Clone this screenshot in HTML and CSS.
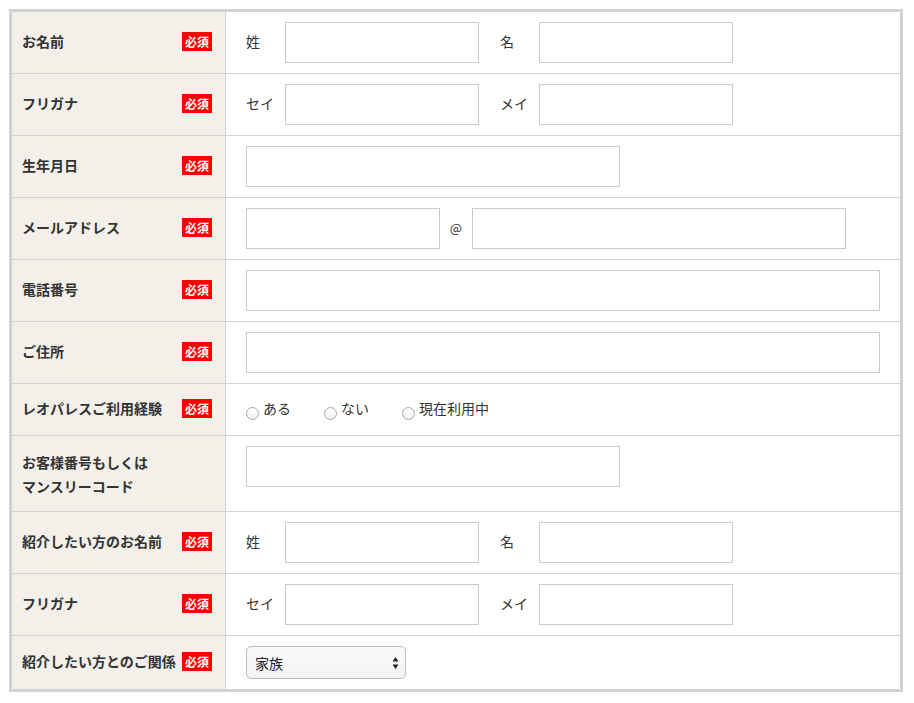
FILE: index.html
```html
<!DOCTYPE html>
<html lang="ja">
<head>
    <meta charset="UTF-8">
    <meta name="viewport" content="width=device-width, initial-scale=1.0">
    <title>ご紹介フォーム</title>
    <link rel="stylesheet" href="styles.css">
</head>
<body>

    <table class="form-table">
        <tr>
            <th><div class="th-inner"><span>お名前</span><span class="req">必須</span></div></th>
            <td>
                <div class="fields">
                    <span class="sub-label">姓</span><input type="text" class="w-s">
                    <span class="sub-label gap">名</span><input type="text" class="w-s">
                </div>
            </td>
        </tr>
        <tr>
            <th><div class="th-inner"><span>フリガナ</span><span class="req">必須</span></div></th>
            <td>
                <div class="fields">
                    <span class="sub-label">セイ</span><input type="text" class="w-s">
                    <span class="sub-label gap">メイ</span><input type="text" class="w-s">
                </div>
            </td>
        </tr>
        <tr>
            <th><div class="th-inner"><span>生年月日</span><span class="req">必須</span></div></th>
            <td><input type="text" class="w-m"></td>
        </tr>
        <tr>
            <th><div class="th-inner"><span>メールアドレス</span><span class="req">必須</span></div></th>
            <td>
                <div class="fields">
                    <input type="text" class="w-s"><span class="at">@</span><input type="text" class="w-m">
                </div>
            </td>
        </tr>
        <tr>
            <th><div class="th-inner"><span>電話番号</span><span class="req">必須</span></div></th>
            <td><input type="text" class="w-full"></td>
        </tr>
        <tr>
            <th><div class="th-inner"><span>ご住所</span><span class="req">必須</span></div></th>
            <td><input type="text" class="w-full"></td>
        </tr>
        <tr>
            <th><div class="th-inner"><span>レオパレスご利用経験</span><span class="req">必須</span></div></th>
            <td>
                <div class="radios">
                    <label><input type="radio" name="use">ある</label>
                    <label><input type="radio" name="use">ない</label>
                    <label><input type="radio" name="use">現在利用中</label>
                </div>
            </td>
        </tr>
        <tr>
            <th class="multi"><div class="th-inner"><span>お客様番号もしくは<br>マンスリーコード</span></div></th>
            <td class="top"><input type="text" class="w-m"></td>
        </tr>
        <tr>
            <th><div class="th-inner"><span>紹介したい方のお名前</span><span class="req">必須</span></div></th>
            <td>
                <div class="fields">
                    <span class="sub-label">姓</span><input type="text" class="w-s">
                    <span class="sub-label gap">名</span><input type="text" class="w-s">
                </div>
            </td>
        </tr>
        <tr>
            <th><div class="th-inner"><span>フリガナ</span><span class="req">必須</span></div></th>
            <td>
                <div class="fields">
                    <span class="sub-label">セイ</span><input type="text" class="w-s">
                    <span class="sub-label gap">メイ</span><input type="text" class="w-s">
                </div>
            </td>
        </tr>
        <tr class="last">
            <th><div class="th-inner"><span>紹介したい方とのご関係</span><span class="req">必須</span></div></th>
            <td>
                <span class="select-wrap">
                    <select>
                        <option>家族</option>
                        <option>友人</option>
                        <option>知人</option>
                    </select>
                    <svg class="select-arrow" width="7" height="14" viewBox="0 0 7 14">
                        <path d="M3.5 1 L6.5 5.5 L0.5 5.5 Z" fill="#222"/>
                        <path d="M3.5 13 L6.5 8.5 L0.5 8.5 Z" fill="#222"/>
                    </svg>
                </span>
            </td>
        </tr>
    </table>

</body>
</html>
```

FILE: styles.css
```css
body {
    margin: 9px;
    background: #fff;
    font-family: "Noto Sans CJK JP", "Noto Sans", sans-serif;
    font-size: 14px;
    color: #333;
}

.form-table {
    width: 894px;
    border: 3px solid #d2d2d2;
    border-spacing: 0;
    border-collapse: separate;
    table-layout: fixed;
}

.form-table th,
.form-table td {
    border-bottom: 1px solid #d2d2d2;
    vertical-align: middle;
}

.form-table tr.last th,
.form-table tr.last td {
    border-bottom: none;
}

.form-table th {
    width: 190px;
    padding: 12px 13px 15px 10px;
    background-color: #f3f0e9;
    border-right: 1px solid #d2d2d2;
    text-align: left;
    font-size: 14px;
    font-weight: bold;
    line-height: 24px;
    color: #333;
}

.form-table th.multi {
    padding: 14px 13px 13px 10px;
    line-height: 24px;
}

.th-inner {
    display: flex;
    justify-content: space-between;
    align-items: center;
}

.req {
    display: inline-block;
    width: 30px;
    height: 19px;
    line-height: 19px;
    background-color: #f00;
    color: #fff;
    font-size: 12px;
    font-weight: bold;
    text-align: center;
    flex-shrink: 0;
}

.form-table td {
    padding: 10px 20px;
}

.form-table td.top {
    vertical-align: top;
}

.fields {
    display: flex;
    align-items: center;
}

.sub-label {
    width: 39px;
    flex-shrink: 0;
    padding-bottom: 4px;
    font-size: 14px;
}

.sub-label.gap {
    margin-left: 21px;
}

.at {
    width: 32px;
    padding-bottom: 2px;
    text-align: center;
    font-size: 13px;
}

input[type="text"] {
    display: block;
    box-sizing: border-box;
    height: 41px;
    border: 1px solid #cbcbcb;
    border-radius: 0;
    margin: 0;
    padding: 0 8px;
    font-family: inherit;
    font-size: 14px;
    background: #fff;
}

.w-s {
    width: 194px;
}

.w-m {
    width: 374px;
}

.w-full {
    width: 100%;
}

.radios {
    display: flex;
    align-items: center;
    padding-bottom: 3px;
    line-height: 24px;
}

.radios label {
    display: flex;
    align-items: center;
    margin-right: 33px;
    font-size: 14px;
}

.radios input[type="radio"] {
    appearance: none;
    -webkit-appearance: none;
    width: 13px;
    height: 13px;
    margin: 10px 4px 0 0;
    border: 1px solid #a9a9a9;
    border-radius: 50%;
    background: linear-gradient(#fff, #f2f2f2);
    box-sizing: border-box;
}

.select-wrap {
    position: relative;
    display: inline-block;
}

select {
    appearance: none;
    -webkit-appearance: none;
    display: block;
    width: 160px;
    height: 33px;
    padding: 0 8px;
    border: 1px solid #bdbdbd;
    border-radius: 5px;
    background: linear-gradient(#fafafa, #f3f3f3);
    font-family: inherit;
    font-size: 14px;
    color: #222;
}

.select-arrow {
    position: absolute;
    right: 7px;
    top: 10px;
    pointer-events: none;
}
```
